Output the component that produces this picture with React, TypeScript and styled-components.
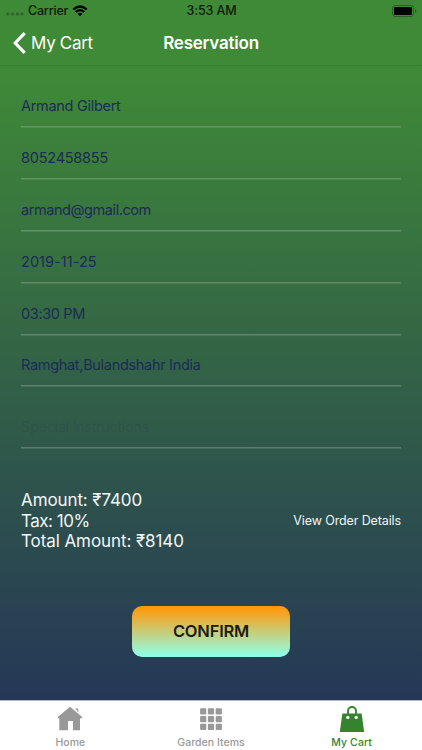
import React from 'react';
import styled, { createGlobalStyle } from 'styled-components';

const GlobalStyle = createGlobalStyle`
  * { box-sizing: border-box; }
  body { margin: 0; font-family: Inter, "Liberation Sans", sans-serif; }
`;

const Screen = styled.div`
  width: 422px;
  height: 750px;
  overflow: hidden;
  display: flex;
  flex-direction: column;
  background: #3f8a37;
`;

const StatusBar = styled.header`
  height: 21px;
  flex: none;
  display: grid;
  grid-template-columns: 1fr auto 1fr;
  align-items: center;
  padding: 0 5px 0 6px;
  color: #0b1c0a;
`;

const Network = styled.div`
  display: flex;
  align-items: center;
`;

const StatusText = styled.span<{ $tracking: number }>`
  font-size: 12.5px;
  line-height: 20px;
  font-weight: 500;
  letter-spacing: ${p => p.$tracking}px;
  white-space: nowrap;
`;

const SignalIcon = styled.svg`
  margin: 7px 4px 0 0;
`;

const WifiIcon = styled.svg`
  margin-left: 4px;
`;

const BatteryIcon = styled.svg`
  justify-self: end;
`;

const NavBar = styled.nav`
  height: 45px;
  flex: none;
  display: grid;
  grid-template-columns: 1fr auto 1fr;
  align-items: center;
  padding: 0 13px;
  border-bottom: 1px solid #387c33;
  color: #fff;
`;

const BackButton = styled.button`
  display: flex;
  align-items: center;
  gap: 5px;
  padding: 0;
  border: 0;
  background: none;
  color: inherit;
  font: 400 17px/24px Inter, sans-serif;
  letter-spacing: -0.3px;
`;

const Title = styled.h1`
  margin: 0;
  font-size: 17px;
  line-height: 24px;
  font-weight: 600;
  letter-spacing: -0.22px;
`;

const Content = styled.main`
  flex: 1;
  display: flex;
  flex-direction: column;
  padding: 9px 21px 0;
  background: linear-gradient(#3f8a37, #253757);
`;

const Field = styled.div<{ $height: number; $tracking: number; $placeholder?: boolean }>`
  height: ${p => p.$height}px;
  flex: none;
  display: flex;
  align-items: flex-end;
  padding-bottom: 10px;
  border-bottom: 1px solid rgba(190, 190, 190, 0.34);
  box-shadow: 0 1px rgba(190, 190, 190, 0.16);
  color: ${p => (p.$placeholder ? '#2e5449' : '#1c2b55')};
  font-size: 14.5px;
  line-height: 20px;
  letter-spacing: ${p => p.$tracking}px;
`;

const Summary = styled.section`
  display: flex;
  align-items: center;
  justify-content: space-between;
  margin-top: 42px;
  color: #f2f6f4;
`;

const Totals = styled.div`
  font-size: 17px;
  line-height: 20.6px;
`;

const TotalLine = styled.div<{ $tracking: number }>`
  letter-spacing: ${p => p.$tracking}px;
`;

const DetailsLink = styled.span`
  font-size: 12.5px;
  line-height: 20px;
  letter-spacing: -0.12px;
`;

const ConfirmButton = styled.button`
  align-self: center;
  width: 158px;
  height: 51px;
  margin-top: 54px;
  padding: 0;
  border: 0;
  border-radius: 10px;
  background: linear-gradient(#ff9a0c 5%, #90ffe5 97%);
  color: #1c1c16;
  font: 600 16.5px/24px Inter, sans-serif;
  letter-spacing: -0.2px;
`;

const TabBar = styled.footer`
  height: 50px;
  flex: none;
  display: grid;
  grid-template-columns: repeat(3, 1fr);
  background: #fff;
  border-top: 1px solid #b4b8bf;
`;

const Tab = styled.div<{ $active?: boolean }>`
  display: flex;
  flex-direction: column;
  align-items: center;
  padding-top: 4px;
  color: ${p => (p.$active ? '#35832f' : '#999')};
`;

const TabLabel = styled.span<{ $tracking: number }>`
  font-size: 10.5px;
  line-height: 14px;
  margin-top: 3px;
  font-weight: 500;
  letter-spacing: ${p => p.$tracking}px;
`;

const fields = [
  { text: 'Armand Gilbert', height: 52, tracking: -0.3 },
  { text: '8052458855', height: 52, tracking: -0.23 },
  { text: 'armand@gmail.com', height: 52, tracking: -0.43 },
  { text: '2019-11-25', height: 52, tracking: 0.05 },
  { text: '03:30 PM', height: 52, tracking: -0.35 },
  { text: 'Ramghat,Bulandshahr India', height: 51, tracking: -0.31 },
  { text: 'Special Instructions', height: 62, tracking: -0.33, placeholder: true },
];

const totals = [
  { text: 'Amount: ₹7400', tracking: -0.1 },
  { text: 'Tax: 10%', tracking: -0.48 },
  { text: 'Total Amount: ₹8140', tracking: -0.08 },
];

export default function App() {
  return (
    <>
      <GlobalStyle />
      <Screen>
        <StatusBar>
          <Network>
            <SignalIcon width="18" height="4" fill="#2f672b">
              {[2, 6.7, 11.4, 16].map(x => <circle key={x} cx={x} cy="2" r="1.7" />)}
            </SignalIcon>
            <StatusText $tracking={-0.2}>Carrier</StatusText>
            <WifiIcon width="16" height="12" viewBox="0 0 16 12" fill="none" stroke="#000" strokeWidth="2.2">
              <path d="M1.2 4.5Q8-1.5 14.8 4.5M3.6 7Q8 3.2 12.4 7" />
              <path d="M5.5 8.7Q8 6.8 10.5 8.7L8 11.3Z" fill="#000" stroke="none" />
            </WifiIcon>
          </Network>
          <StatusText $tracking={-0.12}>3:53 AM</StatusText>
          <BatteryIcon width="25" height="12" viewBox="0 0 25 12">
            <rect x=".5" y=".5" width="21" height="11" rx="2.5" fill="none" stroke="#2b6027" />
            <rect x="2" y="2" width="18" height="8" rx="1" fill="#000" />
            <path d="M23 4Q24.5 4.5 24.5 6T23 8Z" fill="#2b6027" />
          </BatteryIcon>
        </StatusBar>
        <NavBar>
          <BackButton>
            <svg width="13" height="22" viewBox="0 0 13 22" fill="none" stroke="#fff" strokeWidth="3.1">
              <path d="M11.7 1.2 2.2 11l9.5 9.8" />
            </svg>
            My Cart
          </BackButton>
          <Title>Reservation</Title>
        </NavBar>
        <Content>
          {fields.map(f => (
            <Field key={f.text} $height={f.height} $tracking={f.tracking} $placeholder={f.placeholder}>
              <span>{f.text}</span>
            </Field>
          ))}
          <Summary>
            <Totals>
              {totals.map(t => <TotalLine key={t.text} $tracking={t.tracking}><span>{t.text}</span></TotalLine>)}
            </Totals>
            <DetailsLink>View Order Details</DetailsLink>
          </Summary>
          <ConfirmButton>CONFIRM</ConfirmButton>
        </Content>
        <TabBar>
          <Tab>
            <svg width="26" height="28" viewBox="0 0 26 28" fill="currentColor">
              <path d="M13 1.8 25.2 12v1.2h-2.2V25.2h-7v-9.3h-5v9.3H2.3V13.2H.8V12Z" />
              <path d="M18.5 3.5h2.8v4.1l-1-.8V5.2l-1.8-.5Z" />
            </svg>
            <TabLabel $tracking={0.03}>Home</TabLabel>
          </Tab>
          <Tab>
            <svg width="22" height="28" viewBox="0 0 22 28" fill="currentColor">
              {[3.2, 11, 18.8].map(y => [0.1, 7.9, 15.7].map(x => (
                <rect key={`${x}-${y}`} x={x} y={y} width="6.2" height="6.2" rx="1" />
              )))}
            </svg>
            <TabLabel $tracking={0.02}>Garden Items</TabLabel>
          </Tab>
          <Tab $active>
            <svg width="26" height="28" viewBox="0 0 26 28" fill="currentColor">
              <path d="M3.4 8.5h19.2L25.2 27H.8Z" />
              <path d="M9 12V6a4 4 0 0 1 8 0V12" fill="none" stroke="currentColor" strokeWidth="1.9" />
              <circle cx="8.8" cy="12.4" r="1.7" fill="#fff" />
              <circle cx="17.2" cy="12.4" r="1.7" fill="#fff" />
            </svg>
            <TabLabel $tracking={0.1}>My Cart</TabLabel>
          </Tab>
        </TabBar>
      </Screen>
    </>
  );
}
